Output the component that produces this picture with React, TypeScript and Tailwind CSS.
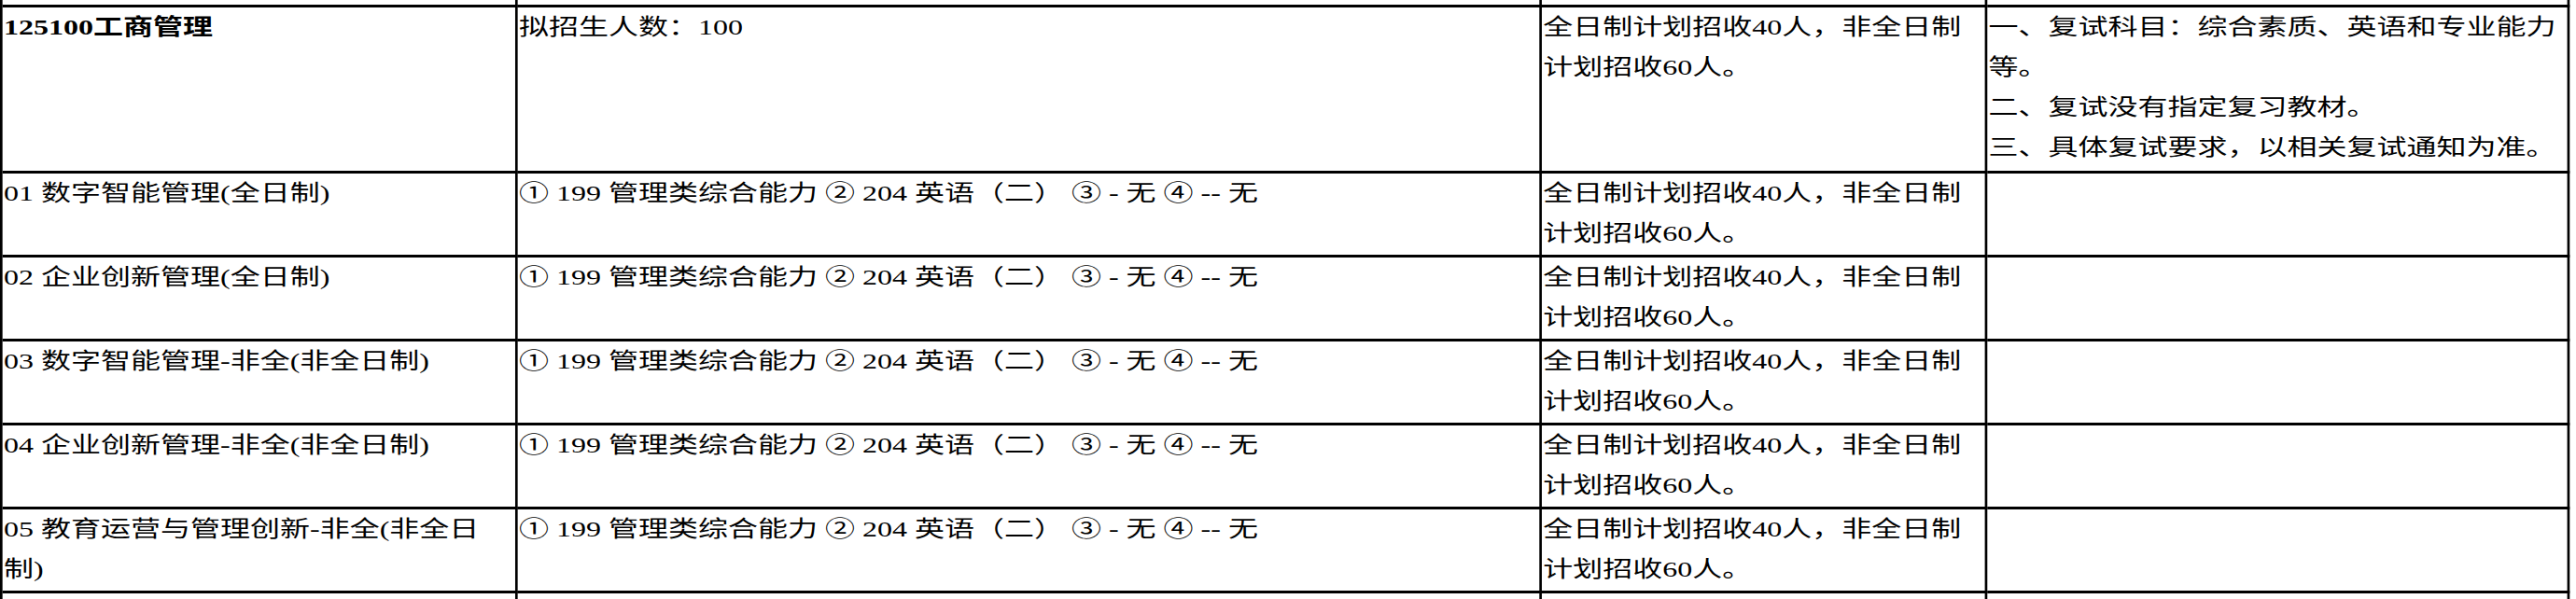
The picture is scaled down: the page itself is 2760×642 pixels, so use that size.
import React from 'react'

// The sheet is laid out at its natural width and stretched sideways,
// the way the source table is printed (wide glyphs, short lines).
const subjects = '① 199 管理类综合能力 ② 204 英语（二） ③ - 无 ④ -- 无'
const quota = '全日制计划招收40人，非全日制计划招收60人。'

const directions = [
  '01 数字智能管理(全日制)',
  '02 企业创新管理(全日制)',
  '03 数字智能管理-非全(非全日制)',
  '04 企业创新管理-非全(非全日制)',
  '05 教育运营与管理创新-非全(非全日制)',
]

const notes = [
  '一、复试科目：综合素质、英语和专业能力等。',
  '二、复试没有指定复习教材。',
  '三、具体复试要求，以相关复试通知为准。',
]

const cell = 'border-r-2 border-b-[3px] border-black px-px overflow-hidden'

function Row({ h, cells }: { h: string; cells: React.ReactNode[] }) {
  return (
    <>
      {cells.map((c, i) => (
        <div key={i} className={`${cell} ${h} ${i === 0 ? 'pr-[4px]' : ''}`}>
          {c}
        </div>
      ))}
    </>
  )
}

export default function App() {
  return (
    <div className="h-[642px] w-full overflow-hidden bg-white text-black">
      <div className="w-[2065px] origin-top-left scale-x-[1.3333] border-l-2 border-black [font-family:'Liberation_Serif','Noto_Sans_CJK_SC',serif] text-[24px] leading-[43px]">
        <div className="grid grid-cols-[414px_823px_358px_468px]">
          {/* tail of the row above */}
          <Row h="h-[8px]" cells={['', '', '', '']} />

          <Row
            h="h-[178px]"
            cells={[
              <span className="font-bold">125100工商管理</span>,
              '拟招生人数：100',
              quota,
              <div>
                {notes.map(n => (
                  <p key={n}>{n}</p>
                ))}
              </div>,
            ]}
          />

          {directions.map(d => (
            <Row key={d} h="h-[90px]" cells={[d, subjects, quota, '']} />
          ))}

          {/* head of the row below */}
          <Row h="h-[20px]" cells={['', '', '', '']} />
        </div>
      </div>
    </div>
  )
}
